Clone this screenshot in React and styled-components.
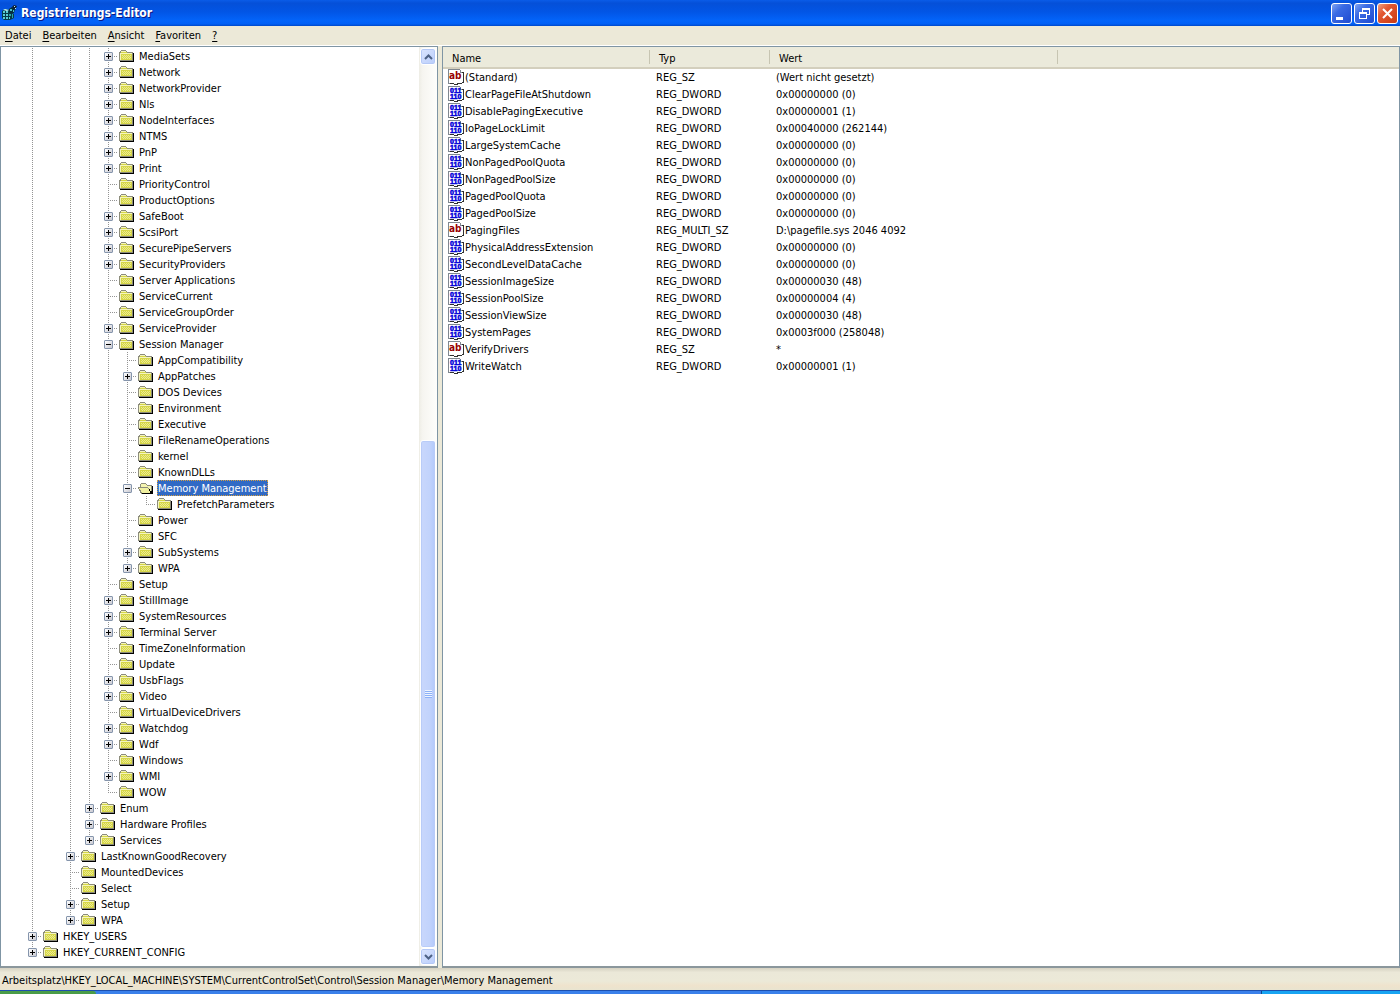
import React, { useState } from "react";
import styled, { createGlobalStyle } from "styled-components";

const GlobalStyle = createGlobalStyle`
    * {
        box-sizing: border-box;
    }

    body {
        margin: 0;
        background: #ece9d8;
        color: #000;
        font-family: "DejaVu Sans Condensed", "DejaVu Sans", sans-serif;
        font-size: 11px;
        line-height: 16px;
    }

    button {
        padding: 0;
        border: none;
        background: none;
        color: inherit;
        font: inherit;
    }
`;

const Window = styled.div`
    display: flex;
    flex-direction: column;
    min-height: 100vh;
`;

const TitleBar = styled.header`
    display: flex;
    align-items: center;
    height: 26px;
    padding: 0 2px 0 1px;
    background: linear-gradient(
        #0a5ce8 0%,
        #0550d8 12%,
        #0255e5 45%,
        #0364fa 80%,
        #0260f5 92%,
        #0148c8 100%
    );
`;

const Title = styled.h1`
    flex: 1;
    margin: 0 0 0 4px;
    color: #fff;
    font-size: 12px;
    font-weight: 700;
    line-height: 26px;
    text-shadow: 1px 1px 0 #0a1883;
`;

const WindowButtons = styled.div`
    display: flex;
    gap: 2px;
`;

const WindowButton = styled.button`
    display: flex;
    width: 21px;
    height: 21px;
    border: 1px solid #fff;
    border-radius: 3px;
    background: ${(props) =>
        props.$close
            ? "linear-gradient(135deg, #f0a080, #e25832 35%, #c93a12)"
            : "linear-gradient(135deg, #7fa4f2, #3a6be4 35%, #1f4bd0)"};
`;

const MenuBar = styled.nav`
    display: flex;
    height: 20px;
    padding-left: 5px;
    gap: 11px;
    border-bottom: 1px solid #fff;
    line-height: 18px;
`;

const Accel = styled.span`
    text-decoration: underline;
    text-underline-offset: 2px;
`;

const Panes = styled.main`
    display: flex;
    flex: 1;
    gap: 4px;
`;

const TreePane = styled.section`
    display: flex;
    flex: 0 0 438px;
    border: 1px solid #7f95a4;
    border-bottom: 2px solid #8b979c;
    background: #fff;
`;

const Tree = styled.ul`
    flex: 1;
    margin: 0;
    padding: 1px 0 6px 22px;
    list-style: none;
`;

const TreeRow = styled.li`
    display: flex;
    height: 16px;
    white-space: nowrap;
`;

const dots = (dir) =>
    `repeating-linear-gradient(${dir}, #949494 0 1px, transparent 1px 2px)`;

const lineBackground = {
    blank: "none",
    line: `${dots("to bottom")} 9px 0 / 1px 16px no-repeat`,
    tee: `${dots("to bottom")} 9px 0 / 1px 16px no-repeat, ${dots("to right")} 9px 8px / 10px 1px no-repeat`,
    elbow: `${dots("to bottom")} 9px 0 / 1px 9px no-repeat, ${dots("to right")} 9px 8px / 10px 1px no-repeat`,
};

const Guide = styled.span`
    display: flex;
    flex: 0 0 19px;
    padding: 4px 5px;
    background: ${(props) => lineBackground[props.$kind]};
`;

const Toggle = styled.button`
    width: 9px;
    height: 9px;
    border: 1px solid #8595ac;
    border-radius: 1px;
    background:
        linear-gradient(#000, #000) center / 5px 1px no-repeat,
        linear-gradient(#000, #000) center / 1px
            ${(props) => (props.$open ? "0" : "5px")} no-repeat,
        linear-gradient(135deg, #fff, #c8c8d0);
`;

const TreeLabel = styled.button`
    height: 16px;
    margin-left: 4px;
    padding: 1px 0 0;
    border: 1px dotted ${(props) => (props.$selected ? "#d8a040" : "transparent")};
    background: ${(props) => (props.$selected ? "#316ac5" : "transparent")};
    color: ${(props) => (props.$selected ? "#fff" : "#000")};
    line-height: 14px;
`;

const ScrollBar = styled.div`
    display: flex;
    flex-direction: column;
    width: 18px;
    padding: 1px;
    background: linear-gradient(to right, #eeede5, #f6f5f0 20%, #fefefb);
`;

const ScrollButton = styled.button`
    display: flex;
    align-items: center;
    justify-content: center;
    height: 17px;
    border: 1px solid #fff;
    border-radius: 3px;
    background: linear-gradient(135deg, #dbe5fe, #b9cdfb);
    box-shadow: inset 0 0 0 1px #b4c8f6;
`;

const ScrollSpace = styled.div`
    flex: 376;
`;

const ScrollThumb = styled.div`
    display: flex;
    flex: 507;
    align-items: center;
    justify-content: center;
    border: 1px solid #fff;
    border-radius: 3px;
    background: linear-gradient(to right, #c9d7fc, #c2d3fc 60%, #b2c9fb);
    box-shadow: inset 0 0 0 1px #b9ccf8;
`;

const Grip = styled.span`
    width: 7px;
    height: 8px;
    background: repeating-linear-gradient(#eef4fe 0 1px, #8cb0f8 1px 2px);
`;

const ListPane = styled.section`
    flex: 1;
    min-width: 0;
    border: 1px solid #7f95a4;
    border-bottom: 2px solid #8b979c;
    background: #fff;
`;

const ValueTable = styled.table`
    width: 100%;
    border-collapse: separate;
    border-spacing: 0;
    table-layout: fixed;
    white-space: nowrap;
`;

const Column = styled.col`
    width: ${(props) => props.$width};
`;

const HeadCell = styled.th`
    height: 22px;
    padding: 3px 0 0 9px;
    border-bottom: 2px solid #d3cfbd;
    background: ${(props) =>
        props.$last
            ? "#ebeadb"
            : "linear-gradient(#c7c5b2, #c7c5b2) right center / 1px 14px no-repeat, #ebeadb"};
    font-weight: 400;
    text-align: left;
`;

const Cell = styled.td`
    height: 17px;
    padding: 0 0 0 6px;
    line-height: 17px;
`;

const NameCell = styled(Cell)`
    padding-left: 5px;
`;

const ValueName = styled.span`
    display: flex;
    gap: 1px;
`;

const StatusBar = styled.footer`
    height: 22px;
    padding: 5px 2px 1px;
    background: linear-gradient(#d6d2c2, #ebe8d8 20%, #ece9d8 60%, #efe3cd 80%, #e8e4d0);
`;

const TaskBar = styled.div`
    display: flex;
    height: 4px;
    border-top: 1px solid #1d4fae;
    background: #3a80ea;
`;

const StartEdge = styled.div`
    width: 96px;
    border-radius: 0 3px 0 0;
    background: #4a9c48;
`;

const TrayEdge = styled.div`
    width: 139px;
    margin-left: auto;
    border-left: 1px solid #0a4a90;
    background: #18a4f2;
`;

// level, name, toggle ("+" collapsed, "-" expanded)
const keys = [
    [5, "MediaSets", "+"],
    [5, "Network", "+"],
    [5, "NetworkProvider", "+"],
    [5, "Nls", "+"],
    [5, "NodeInterfaces", "+"],
    [5, "NTMS", "+"],
    [5, "PnP", "+"],
    [5, "Print", "+"],
    [5, "PriorityControl"],
    [5, "ProductOptions"],
    [5, "SafeBoot", "+"],
    [5, "ScsiPort", "+"],
    [5, "SecurePipeServers", "+"],
    [5, "SecurityProviders", "+"],
    [5, "Server Applications"],
    [5, "ServiceCurrent"],
    [5, "ServiceGroupOrder"],
    [5, "ServiceProvider", "+"],
    [5, "Session Manager", "-"],
    [6, "AppCompatibility"],
    [6, "AppPatches", "+"],
    [6, "DOS Devices"],
    [6, "Environment"],
    [6, "Executive"],
    [6, "FileRenameOperations"],
    [6, "kernel"],
    [6, "KnownDLLs"],
    [6, "Memory Management", "-"],
    [7, "PrefetchParameters"],
    [6, "Power"],
    [6, "SFC"],
    [6, "SubSystems", "+"],
    [6, "WPA", "+"],
    [5, "Setup"],
    [5, "StillImage", "+"],
    [5, "SystemResources", "+"],
    [5, "Terminal Server", "+"],
    [5, "TimeZoneInformation"],
    [5, "Update"],
    [5, "UsbFlags", "+"],
    [5, "Video", "+"],
    [5, "VirtualDeviceDrivers"],
    [5, "Watchdog", "+"],
    [5, "Wdf", "+"],
    [5, "Windows"],
    [5, "WMI", "+"],
    [5, "WOW"],
    [4, "Enum", "+"],
    [4, "Hardware Profiles", "+"],
    [4, "Services", "+"],
    [3, "LastKnownGoodRecovery", "+"],
    [3, "MountedDevices"],
    [3, "Select"],
    [3, "Setup", "+"],
    [3, "WPA", "+"],
    [1, "HKEY_USERS", "+"],
    [1, "HKEY_CURRENT_CONFIG", "+"],
];

const values = [
    ["(Standard)", "REG_SZ", "(Wert nicht gesetzt)"],
    ["ClearPageFileAtShutdown", "REG_DWORD", "0x00000000 (0)"],
    ["DisablePagingExecutive", "REG_DWORD", "0x00000001 (1)"],
    ["IoPageLockLimit", "REG_DWORD", "0x00040000 (262144)"],
    ["LargeSystemCache", "REG_DWORD", "0x00000000 (0)"],
    ["NonPagedPoolQuota", "REG_DWORD", "0x00000000 (0)"],
    ["NonPagedPoolSize", "REG_DWORD", "0x00000000 (0)"],
    ["PagedPoolQuota", "REG_DWORD", "0x00000000 (0)"],
    ["PagedPoolSize", "REG_DWORD", "0x00000000 (0)"],
    ["PagingFiles", "REG_MULTI_SZ", "D:\\pagefile.sys 2046 4092"],
    ["PhysicalAddressExtension", "REG_DWORD", "0x00000000 (0)"],
    ["SecondLevelDataCache", "REG_DWORD", "0x00000000 (0)"],
    ["SessionImageSize", "REG_DWORD", "0x00000030 (48)"],
    ["SessionPoolSize", "REG_DWORD", "0x00000004 (4)"],
    ["SessionViewSize", "REG_DWORD", "0x00000030 (48)"],
    ["SystemPages", "REG_DWORD", "0x0003f000 (258048)"],
    ["VerifyDrivers", "REG_SZ", "*"],
    ["WriteWatch", "REG_DWORD", "0x00000001 (1)"],
];

const menus = ["Datei", "Bearbeiten", "Ansicht", "Favoriten", "?"];

// true when another key of this level still follows under the same parent
const hasNext = (index, level) => {
    for (let i = index + 1; i < keys.length; i++) {
        if (keys[i][0] === level) return true;
        if (keys[i][0] < level) return false;
    }
    return false;
};

const guideKind = (index, level) => {
    const next = hasNext(index, level);
    if (level === keys[index][0]) return next ? "tee" : "elbow";
    return next ? "line" : "blank";
};

function FolderIcon({ open }) {
    return (
        <svg width="16" height="16" shapeRendering="crispEdges" aria-hidden="true">
            {open ? (
                <>
                    <path d="M3 13V4h1V3h5v1h1v1h5v8z" fill="#8c8c7c" />
                    <path d="M4 12V4h5v1h1v1h4v6z" fill="#f4f4b0" />
                    <path d="M1 7h10v1h1v2h1v2h1v2H4v-1H3v-2H2V9H1z" fill="#8c8c7c" />
                    <path d="M2 8h9v1h1v2h1v2H5v-1H4v-2H3V9H2z" fill="#f0f0a0" />
                    <path d="M15 6h1v8H5v-1h9v-2h1zM12 9h1v2h1v2h-1v-2h-1z" fill="#000" />
                </>
            ) : (
                <>
                    <path d="M1 13V4h1V3h1V2h5v1h1v1h6v9z" fill="#8c8c7c" />
                    <path d="M2 5h1V3h5v1h1v1h5v7H2z" fill="#d6d648" />
                    <path d="M2 5h12v1H3v6H2zM3 3h5v1H3z" fill="#f4f4c0" />
                    <path
                        d="M4 7h1v1H4zM6 7h1v1H6zM8 7h1v1H8zM10 7h1v1h-1zM12 7h1v1h-1zM5 8h1v1H5zM7 8h1v1H7zM9 8h1v1H9zM11 8h1v1h-1zM4 9h1v1H4zM6 9h1v1H6zM8 9h1v1H8zM10 9h1v1h-1zM12 9h1v1h-1zM5 10h1v1H5zM7 10h1v1H7zM9 10h1v1H9zM11 10h1v1h-1z"
                        fill="#ecec90"
                    />
                    <path d="M15 5h1v9H2v-1h13z" fill="#000" />
                </>
            )}
        </svg>
    );
}

function ValueIcon({ text }) {
    return (
        <svg width="16" height="17" aria-hidden="true">
            <path d="M1 1h11l3 3v10H1z" fill="#fff" />
            <path
                d="M0 0h12v1H1v13h1v1H0zM12 1h1v2h2v1h-3z"
                fill="#808890"
                shapeRendering="crispEdges"
            />
            <path
                d="M14 3h2v11h-2v-1h1V4h-1zM2 14h4v1H2zM6 15h3v-1h5v1h-4v1H6z"
                fill="#303030"
                shapeRendering="crispEdges"
            />
            {text ? (
                <text
                    x="1"
                    y="10"
                    fill="#980000"
                    fontFamily="DejaVu Sans Condensed"
                    fontWeight="700"
                    fontSize="10"
                >
                    ab
                </text>
            ) : (
                <g
                    fill="#0000d8"
                    stroke="#0000d8"
                    strokeWidth="0.5"
                    fontFamily="Liberation Sans"
                    fontWeight="700"
                    fontSize="7"
                >
                    <text x="2" y="7">011</text>
                    <text x="2" y="13">110</text>
                </g>
            )}
        </svg>
    );
}

function RegeditIcon() {
    return (
        <svg width="16" height="16" aria-hidden="true">
            <path d="M1 6l3-2 5 1 1 3 3 1v4l-4 2H3l-2-2z" fill="#063c48" />
            <path
                d="M2 6h2v2H2zM5 6h2v2H5zM2 9h2v2H2zM5 9h2v2H5zM2 12h2v2H2zM5 12h2v2H5zM8 12h1v2H8z"
                fill="#58ced4"
            />
            <path d="M2 5l2-1 4 1-2 1z" fill="#c4fffc" />
            <path d="M8 9h2v2H8zM11 9h1v4h-1z" fill="#2aa5ac" />
            <path d="M8 4l3-2 3 2-1 4-3 1-2-2z" fill="#06303c" />
            <path d="M9 4h2v2H9zM12 5h1v2h-1z" fill="#48c0c4" />
            <path d="M11 2l2-2 3 1-2 4z" fill="#101c30" />
            <path d="M13 1h1v1h-1zM14 3h1v1h-1z" fill="#b8f8f8" />
        </svg>
    );
}

function Chevron({ down }) {
    return (
        <svg width="9" height="6" aria-hidden="true">
            <path
                d={down ? "M1 1l3.500 3.500L8 1" : "M1 5l3.500-3.500L8 5"}
                fill="none"
                stroke="#4d6185"
                strokeWidth="2"
            />
        </svg>
    );
}

export default function App() {
    const [selected, setSelected] = useState("Memory Management");

    return (
        <Window>
            <GlobalStyle />
            <TitleBar>
                <RegeditIcon />
                <Title>Registrierungs-Editor</Title>
                <WindowButtons>
                    <WindowButton aria-label="Minimieren">
                        <svg width="19" height="19">
                            <path d="M4 13h7v3H4z" fill="#fff" />
                        </svg>
                    </WindowButton>
                    <WindowButton aria-label="Verkleinern">
                        <svg width="19" height="19" fill="#fff" shapeRendering="crispEdges">
                            <path d="M7 4h8v7h-3v-1h2V6H8v2H7z" />
                            <path d="M4 8h8v7H4zM5 10v4h6v-4z" fillRule="evenodd" />
                        </svg>
                    </WindowButton>
                    <WindowButton $close aria-label="Schließen">
                        <svg width="19" height="19">
                            <path d="M5 5l9 9M14 5l-9 9" stroke="#fff" strokeWidth="2" />
                        </svg>
                    </WindowButton>
                </WindowButtons>
            </TitleBar>
            <MenuBar>
                {menus.map((menu) => (
                    <button key={menu}>
                        <Accel>{menu[0]}</Accel>
                        {menu.slice(1)}
                    </button>
                ))}
            </MenuBar>
            <Panes>
                <TreePane>
                    <Tree>
                        {keys.map(([level, name, toggle], index) => {
                            const isSelected = name === selected;
                            return (
                                <TreeRow key={index}>
                                    {Array.from({ length: level }, (_, i) => (
                                        <Guide key={i} $kind={guideKind(index, i + 1)}>
                                            {toggle && i + 1 === level && (
                                                <Toggle
                                                    $open={toggle === "-"}
                                                    aria-label={name}
                                                    aria-expanded={toggle === "-"}
                                                />
                                            )}
                                        </Guide>
                                    ))}
                                    <FolderIcon open={isSelected} />
                                    <TreeLabel
                                        $selected={isSelected}
                                        onClick={() => setSelected(name)}
                                    >
                                        {name}
                                    </TreeLabel>
                                </TreeRow>
                            );
                        })}
                    </Tree>
                    <ScrollBar>
                        <ScrollButton aria-label="Nach oben">
                            <Chevron />
                        </ScrollButton>
                        <ScrollSpace />
                        <ScrollThumb>
                            <Grip />
                        </ScrollThumb>
                        <ScrollButton aria-label="Nach unten">
                            <Chevron down />
                        </ScrollButton>
                    </ScrollBar>
                </TreePane>
                <ListPane>
                    <ValueTable>
                        <colgroup>
                            <Column $width="207px" />
                            <Column $width="120px" />
                            <Column $width="288px" />
                            <Column $width="auto" />
                        </colgroup>
                        <thead>
                            <tr>
                                <HeadCell>Name</HeadCell>
                                <HeadCell>Typ</HeadCell>
                                <HeadCell>Wert</HeadCell>
                                <HeadCell as="td" $last />
                            </tr>
                        </thead>
                        <tbody>
                            {values.map(([name, type, data]) => (
                                <tr key={name}>
                                    <NameCell>
                                        <ValueName>
                                            <ValueIcon text={type !== "REG_DWORD"} />
                                            {name}
                                        </ValueName>
                                    </NameCell>
                                    <Cell>{type}</Cell>
                                    <Cell>{data}</Cell>
                                </tr>
                            ))}
                        </tbody>
                    </ValueTable>
                </ListPane>
            </Panes>
            <StatusBar>
                Arbeitsplatz\HKEY_LOCAL_MACHINE\SYSTEM\CurrentControlSet\Control\Session
                Manager\Memory Management
            </StatusBar>
            <TaskBar>
                <StartEdge />
                <TrayEdge />
            </TaskBar>
        </Window>
    );
}
